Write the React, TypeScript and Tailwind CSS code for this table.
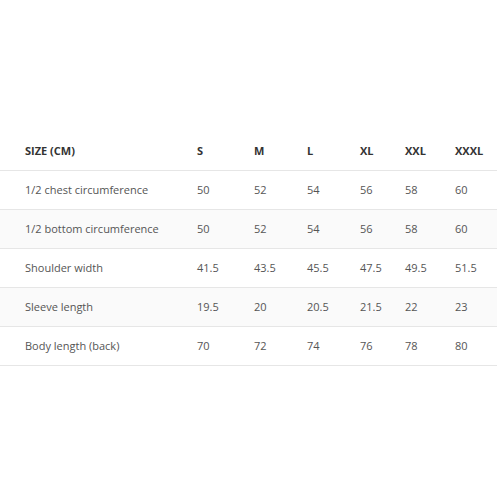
import React from "react";

const sizes = ["S", "M", "L", "XL", "XXL", "XXXL"];
const rows: [string, string[]][] = [
  ["1/2 chest circumference", ["50", "52", "54", "56", "58", "60"]],
  ["1/2 bottom circumference", ["50", "52", "54", "56", "58", "60"]],
  ["Shoulder width", ["41.5", "43.5", "45.5", "47.5", "49.5", "51.5"]],
  ["Sleeve length", ["19.5", "20", "20.5", "21.5", "22", "23"]],
  ["Body length (back)", ["70", "72", "74", "76", "78", "80"]],
];

const grid = "grid grid-cols-[197px_57px_53px_53px_45px_50px_42px] items-center";

export default function App() {
  return (
    <div className="w-[500px] h-[500px] bg-white pt-[132px]" style={{ fontFamily: '"Open Sans", sans-serif' }}>
      <div className="w-[497px]">
        <div className={`${grid} h-[39px] border-b border-[#e6e6e6] text-[11px] font-bold text-[#333]`}>
          <div className="pl-[25px]">SIZE (CM)</div>
          {sizes.map((s) => (
            <div key={s}>{s}</div>
          ))}
        </div>
        {rows.map(([label, vals], i) => (
          <div
            key={label}
            className={`${grid} h-[39px] border-b border-[#e6e6e6] text-[11px] text-[#555] ${i % 2 === 1 ? "bg-[#fafafa]" : "bg-white"}`}
          >
            <div className="pl-[25px]">{label}</div>
            {vals.map((v, j) => (
              <div key={j}>{v}</div>
            ))}
          </div>
        ))}
      </div>
    </div>
  );
}
